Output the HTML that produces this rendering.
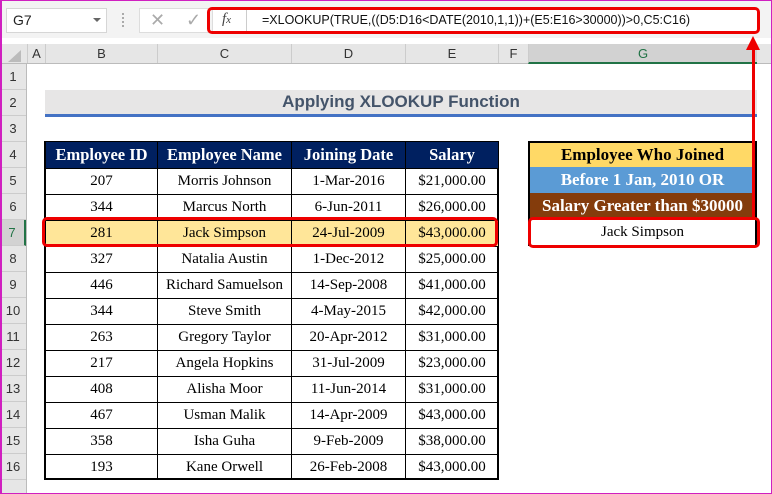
<!DOCTYPE html>
<html><head><meta charset="utf-8"><style>
*{margin:0;padding:0;box-sizing:border-box}
body{width:772px;height:494px;overflow:hidden;background:#fff;position:relative;font-family:"Liberation Sans",sans-serif}
.a{position:absolute}
.c{position:absolute;display:flex;align-items:center;justify-content:center;white-space:nowrap}
.ser{font-family:"Liberation Serif",serif;font-size:15px;color:#000}
.hdr{background:#e6e6e6;color:#333;font-size:13px}
</style></head><body>
<div class="a" style="left:0;top:0;width:772px;height:38px;background:#f3f3f3"></div>
<div class="a" style="left:6px;top:8px;width:101px;height:25px;background:#fff;border:1px solid #d6d6d6"></div>
<div class="a" style="left:13px;top:12px;font-size:14px;color:#222">G7</div>
<div class="a" style="left:93px;top:18px;width:0;height:0;border-left:4px solid transparent;border-right:4px solid transparent;border-top:4px solid #666"></div>
<div class="a" style="left:122px;top:13px;width:2px;height:14px;border-left:2px dotted #aaa"></div>
<div class="a" style="left:139px;top:8px;width:70px;height:25px;background:#fff;border:1px solid #ddd"></div>
<div class="a" style="left:150px;top:10px;font-size:18px;color:#aaa">✕</div>
<div class="a" style="left:186px;top:10px;font-size:18px;color:#aaa">✓</div>
<div class="a" style="left:212px;top:8px;width:546px;height:25px;background:#fff;border:1px solid #ddd"></div>
<div class="a" style="left:246px;top:8px;width:1px;height:25px;background:#ccc"></div>
<div class="a" style="left:222px;top:11px;font-family:'Liberation Serif',serif;font-style:italic;font-size:15px;color:#444">f<span style="font-size:11px">x</span></div>
<div class="a" style="left:262px;top:13px;font-size:12.5px;color:#111;white-space:nowrap">=XLOOKUP(TRUE,((D5:D16&lt;DATE(2010,1,1))+(E5:E16&gt;30000))&gt;0,C5:C16)</div>
<div class="a" style="left:207px;top:7px;width:553px;height:27px;border:3px solid #e00;border-radius:5px"></div>
<div class="a hdr" style="left:0;top:44px;width:772px;height:20px;border-bottom:1px solid #bbb"></div>
<div class="a" style="left:8px;top:50px;width:0;height:0;border-left:13px solid transparent;border-bottom:12px solid #bbb"></div>
<div class="c hdr" style="left:27px;top:44px;width:18px;height:19px;border-left:1px solid #ccc">A</div>
<div class="c hdr" style="left:45px;top:44px;width:112px;height:19px;border-left:1px solid #ccc">B</div>
<div class="c hdr" style="left:157px;top:44px;width:134px;height:19px;border-left:1px solid #ccc">C</div>
<div class="c hdr" style="left:291px;top:44px;width:114px;height:19px;border-left:1px solid #ccc">D</div>
<div class="c hdr" style="left:405px;top:44px;width:93px;height:19px;border-left:1px solid #ccc">E</div>
<div class="c hdr" style="left:498px;top:44px;width:30px;height:19px;border-left:1px solid #ccc">F</div>
<div class="c" style="left:528px;top:44px;width:229px;height:20px;background:#d2d2d2;color:#217346;font-size:13px;border-bottom:2px solid #217346;border-left:1px solid #ccc">G</div>
<div class="a hdr" style="left:0;top:64px;width:27px;height:430px;border-right:1px solid #bbb"></div>
<div id="rh"></div>
<div class="c" style="left:45px;top:90px;width:712px;height:24px;background:#e7e6e6;color:#44546a;font-weight:bold;font-size:17px">Applying XLOOKUP Function</div>
<div class="a" style="left:45px;top:114px;width:712px;height:3px;background:#4472c4"></div>
<div id="tb"></div>
<div class="a" style="left:528px;top:141px;width:229px;height:105px;border:2px solid #000;border-bottom:none"></div>
<div class="c ser" style="left:530px;top:143px;width:225px;height:24px;background:#ffd966;font-weight:bold;font-size:17px">Employee Who Joined</div>
<div class="c ser" style="left:530px;top:167px;width:225px;height:26px;background:#5b9bd5;color:#fff;font-weight:bold;font-size:17px">Before 1 Jan, 2010 OR</div>
<div class="c ser" style="left:530px;top:193px;width:225px;height:26px;background:#843c0c;color:#fff;font-weight:bold;font-size:17px">Salary Greater than $30000</div>
<div class="c ser" style="left:530px;top:219px;width:225px;height:26px;background:#fff">Jack Simpson</div>
<div class="a" style="left:528px;top:217px;width:232px;height:31px;border:3px solid #e00;border-radius:5px"></div>
<div class="a" style="left:752px;top:48px;width:3px;height:170px;background:#e00"></div>
<div class="a" style="left:746px;top:36px;width:0;height:0;border-left:7px solid transparent;border-right:7px solid transparent;border-bottom:14px solid #e00"></div>
<div class="a" style="left:0;top:0;width:772px;height:494px;border:1px solid #d020c0;border-left-width:2px"></div>
<script>
var rh='';for(var i=1;i<=16;i++){rh+='<div class="c hdr" style="left:0;top:'+(64+(i-1)*26)+'px;width:26px;height:26px;border-bottom:1px solid #ccc;'+(i==7?'background:#d2d2d2;color:#217346;border-right:2px solid #217346':'')+'">'+i+'</div>'}
rh+='<div class="a hdr" style="left:0;top:480px;width:26px;height:14px"></div>';
document.getElementById('rh').innerHTML=rh;
var d=[["207","Morris Johnson","1-Mar-2016","$21,000.00"],["344","Marcus North","6-Jun-2011","$26,000.00"],["281","Jack Simpson","24-Jul-2009","$43,000.00"],["327","Natalia Austin","1-Dec-2012","$25,000.00"],["446","Richard Samuelson","14-Sep-2008","$41,000.00"],["344","Steve Smith","4-May-2015","$42,000.00"],["263","Gregory Taylor","20-Apr-2012","$31,000.00"],["217","Angela Hopkins","31-Jul-2009","$23,000.00"],["408","Alisha Moor","11-Jun-2014","$31,000.00"],["467","Usman Malik","14-Apr-2009","$43,000.00"],["358","Isha Guha","9-Feb-2009","$38,000.00"],["193","Kane Orwell","26-Feb-2008","$43,000.00"]];
var xs=[45,157,291,405,498];
var h='<div class="a" style="left:44px;top:141px;width:455px;height:339px;border:2px solid #000"></div>';
var hd=["Employee ID","Employee Name","Joining Date","Salary"];
for(var j=0;j<4;j++)h+='<div class="c ser" style="left:'+xs[j]+'px;top:142px;width:'+(xs[j+1]-xs[j])+'px;height:26px;background:#002060;color:#fff;font-weight:bold;font-size:16.5px;border-left:1px solid #000">'+hd[j]+'</div>';
for(var r=0;r<12;r++){for(var j=0;j<4;j++){h+='<div class="c ser" style="left:'+xs[j]+'px;top:'+(168+r*26)+'px;width:'+(xs[j+1]-xs[j])+'px;height:26px;'+(r==2?'background:#ffe699;':'')+'border-left:1px solid #000;border-top:1px solid #000">'+d[r][j]+'</div>'}}
h+='<div class="a" style="left:42px;top:217px;width:456px;height:30px;border:3px solid #e00;border-radius:5px"></div>';
document.getElementById('tb').innerHTML=h;
</script>
</body></html>
